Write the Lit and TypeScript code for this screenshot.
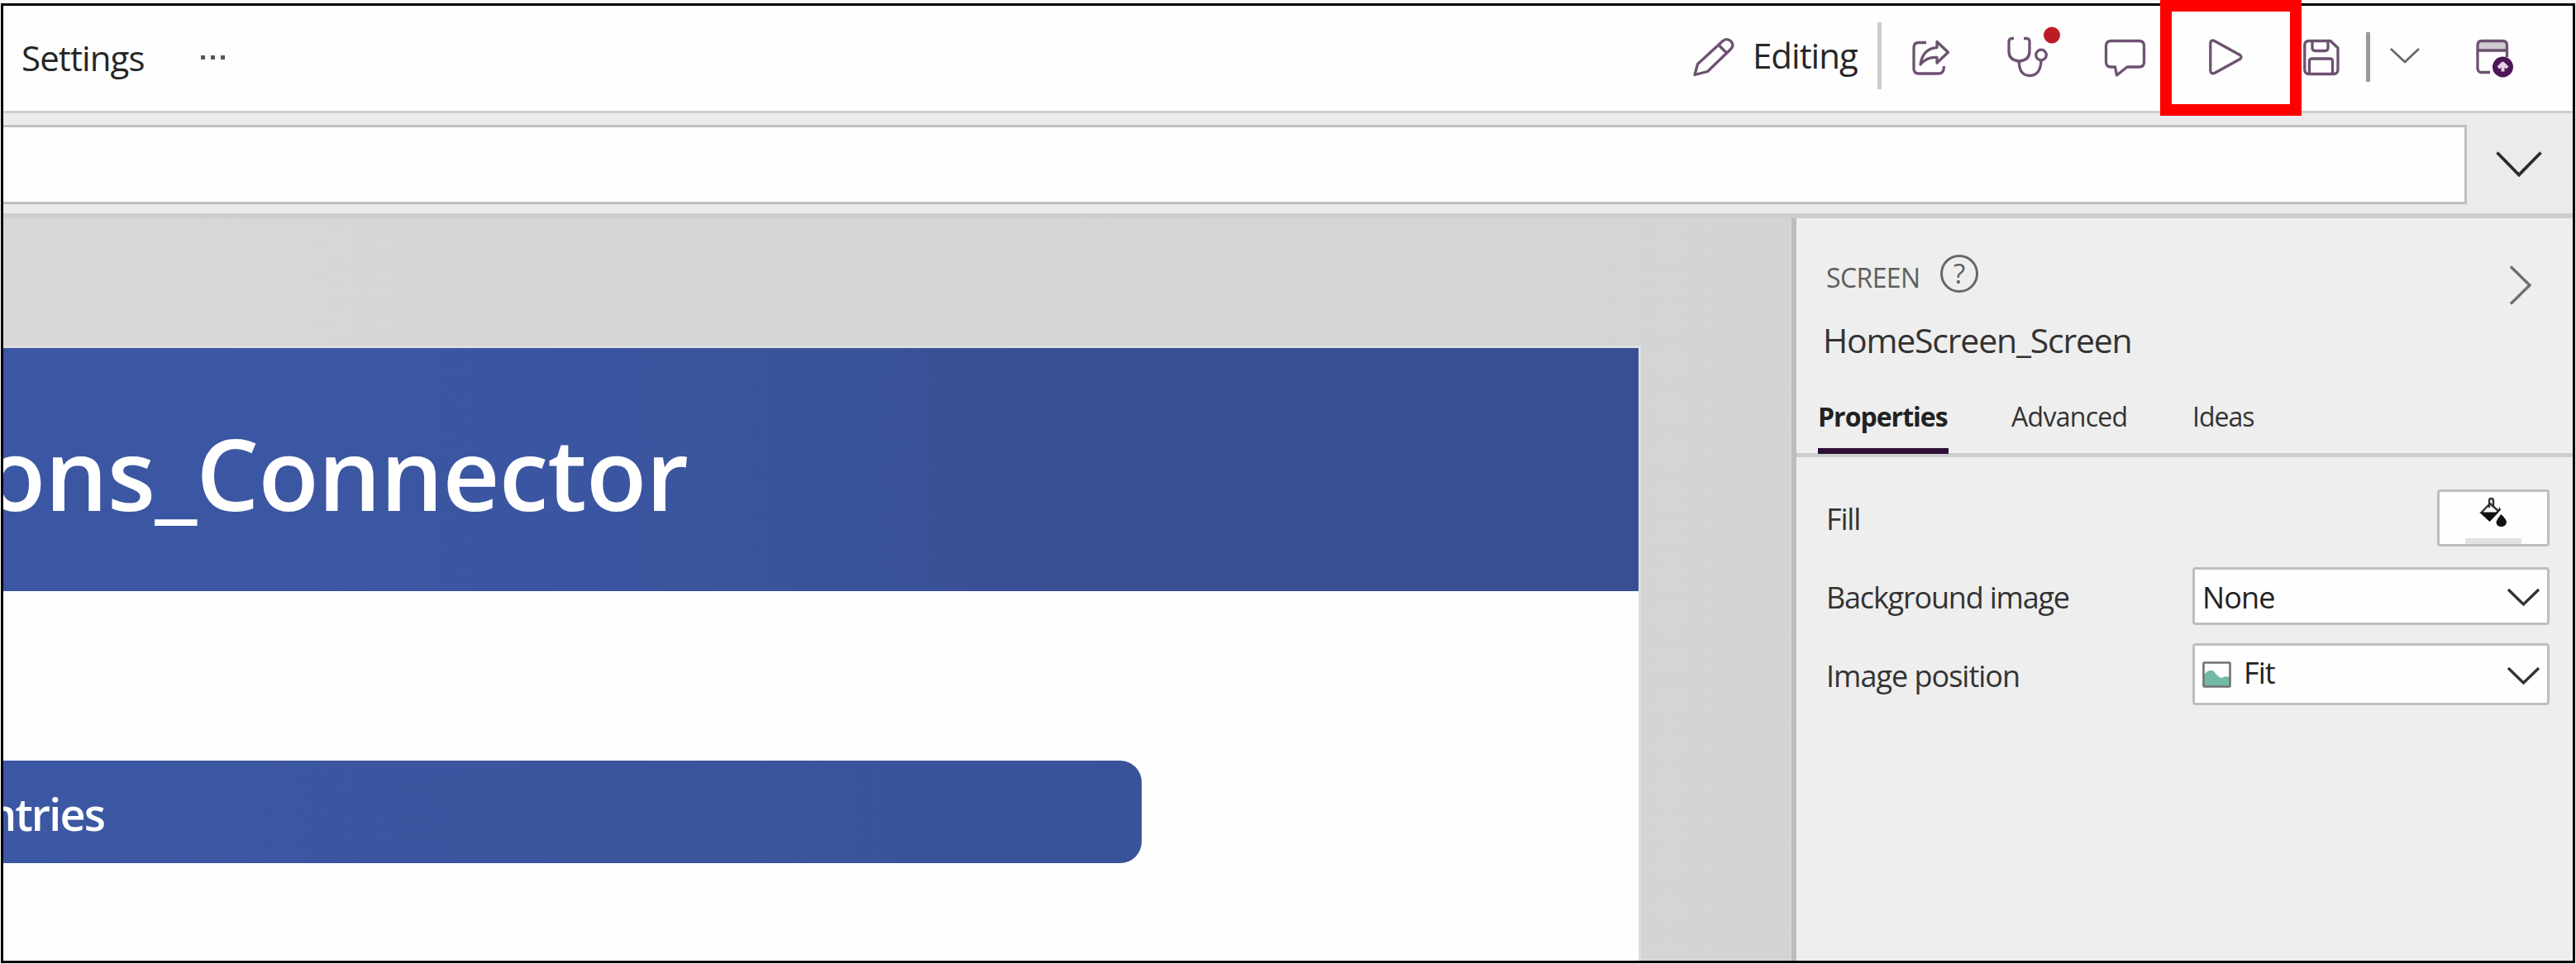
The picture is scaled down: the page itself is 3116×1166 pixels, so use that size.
import { LitElement, html, css, svg } from "lit";
import { customElement, property } from "lit/decorators.js";

const FONT = css`"Open Sans", "Noto Sans", "Liberation Sans", sans-serif`;

const ICONS: Record<string, { w: number; h: number; body: unknown }> = {
  pencil: {
    w: 50, h: 54,
    body: svg`<path d="M2 46.5 L5.5 33.5 L36 5.5 Q41 1.500 46 6 Q50 11 45.500 15.500 L17.500 42.500 Z M31 10.500 L41 20.500"/>`,
  },
  share: {
    w: 46, h: 54,
    body: svg`<path d="M18 7.500 H9 Q3 7.500 3 13.500 V39 Q3 45 9 45 H33 Q39.500 45 39.500 36"/>
      <path d="M31 6.500 L44.500 19.300 L31 32 V25.500 Q19 24.500 11 34 Q13.500 15 31 13.300 Z"/>`,
  },
  stethoscope: {
    w: 64, h: 54,
    body: svg`<path d="M8 2.500 H5.500 Q2 2.500 2 6.500 V18 Q2 29 14.500 30 Q27 29 27 18 V6.500 Q27 2.500 23.500 2.500 H20"/>
      <path d="M14.500 30 V33.500 Q15.500 47.500 27.500 47.500 Q40 47 41 30"/>
      <circle cx="41" cy="22.500" r="6.300"/>
      <circle class="alert" cx="54" cy="-1.500" r="10"/>`,
  },
  comment: {
    w: 50, h: 54,
    body: svg`<path d="M7.500 5.500 H41.500 Q47.500 5.500 47.500 11.500 V31 Q47.500 37 41.500 37 H27 L14.500 47 L12.500 37 H7.500 Q1.500 37 1.500 31 V11.500 Q1.500 5.500 7.500 5.500 Z"/>`,
  },
  play: {
    w: 44, h: 54,
    body: svg`<path d="M2.800 9 Q2.800 3 8.500 6 L38.500 22.500 Q41.500 25 38.500 27.500 L8.500 44 Q2.800 46.500 2.800 41 Z"/>`,
  },
  save: {
    w: 44, h: 54,
    body: svg`<path d="M7 5.500 H33 L42 14 V40 Q42 45.500 36.500 45.500 H7 Q1.800 45.500 1.800 40 V11 Q1.800 5.500 7 5.500 Z"/>
      <path d="M11 6 V14 Q11 17.500 14.500 17.500 H26.500 Q30 17.500 30 14 V6"/>
      <path d="M7.500 45 V30 Q7.500 27 10.500 27 H32.500 Q35.500 27 35.500 30 V45"/>`,
  },
  chevronSmall: { w: 36, h: 54, body: svg`<path class="thin" d="M1 15 L18 31 L35 15"/>` },
  publish: {
    w: 46, h: 54,
    body: svg`<path class="title" d="M2 6 H37 V16 H2 Z"/>
      <path d="M17 43.500 H7 Q2 43.500 2 38.500 V10.500 Q2 5.500 7 5.500 H32 Q37.500 5.500 37.500 10.500 V25 M2 17 H37"/>
      <circle class="badge" cx="32.500" cy="37" r="12.500"/>
      <path class="up" d="M32.500 42.500 V34 M27 38 L32.500 32.500 L38 38"/>`,
  },
  chevronBig: { w: 56, h: 32, body: svg`<path class="dark" d="M1.500 1.500 L28 28.500 L54.500 1.500"/>` },
  chevronRight: { w: 28, h: 48, body: svg`<path class="grey" d="M2 1.500 L25 24 L2 46.500"/>` },
  chevronSelect: { w: 40, h: 23, body: svg`<path class="select" d="M2 2 L20.500 20 L39 2"/>` },
  bucket: {
    w: 36, h: 38,
    body: svg`<path class="ring" d="M13 13 V5 Q13 2 15.500 2 Q18 2 18 5 V13"/>
      <path class="ring" d="M14 8 L4 18.500 L13.500 28 L24 17 Z"/>
      <path class="solid" d="M1 18.500 H24.500 L13.500 30 Z M25.500 12 L23 19 L27 16 Z"/>
      <path class="solid" d="M27.500 21 Q34.500 28 34 31 Q33 36 27.500 36 Q22 36 21.500 31 Q21.500 28 27.500 21 Z"/>`,
  },
  picture: {
    w: 35, h: 32,
    body: svg`<path class="hill" d="M2 16 Q9 8 14 12 Q18 18 23 20 Q28 17 33 19 V30 H2 Z"/>
      <rect class="edge" x="1.500" y="1.500" width="32" height="29" rx="1"/>`,
  },
};

@customElement("ui-icon")
export class UiIcon extends LitElement {
  @property() name = "pencil";

  static styles = css`
    :host { display: block; flex: none; }
    svg { display: block; overflow: visible; fill: none; stroke: #6c5270; stroke-width: 3.3; stroke-linejoin: round; }
    .alert { fill: #bd1c25; stroke: none; }
    .thin { stroke: #666; stroke-width: 2.6; }
    .title { fill: #cfcbd0; stroke: none; }
    .badge { fill: #4d1656; stroke: none; }
    .up { stroke: #e3d3e7; stroke-width: 4; }
    .dark { stroke: #2b2b2b; stroke-width: 3.8; stroke-linejoin: miter; }
    .grey { stroke: #6e6e6e; stroke-width: 3.4; stroke-linejoin: miter; }
    .select { stroke: #333; stroke-width: 3.4; stroke-linejoin: miter; }
    .ring { stroke: #333; stroke-width: 2.4; }
    .solid { fill: #111; stroke: none; }
    .hill { fill: #74b9a8; stroke: none; }
    .edge { stroke: #6d7371; stroke-width: 2.6; }
  `;

  render() {
    const icon = ICONS[this.name];
    return html`<svg width=${icon.w} height=${icon.h} viewBox="0 0 ${icon.w} ${icon.h}">${icon.body}</svg>`;
  }
}

@customElement("top-bar")
export class TopBar extends LitElement {
  static styles = css`
    :host { display: flex; align-items: flex-start; box-sizing: border-box; height: 130px; background: #fefefe;
      border-bottom: 3px solid #cdcdcd; padding: 37px 71px 0 22px; font: 42px/54px ${FONT}; color: #262626; }
    .menu { letter-spacing: -0.9px; margin-top: -1px; }
    .menu.mode { width: 131px; margin: -4px 20px 0 22px; letter-spacing: -1px; white-space: nowrap; }
    .dots { display: flex; gap: 7px; margin: 23px 0 0 68px; }
    .dot { width: 5px; height: 5px; background: #555; }
    .tools { display: flex; align-items: flex-start; margin-left: auto; }
    .rule { width: 5px; height: 81px; margin-top: -17px; background: #cdcdcd; }
    .rule.dark { height: 60px; margin-top: -5px; background: #9a9a9a; }
    .share { margin-left: 36px; }
    .check { margin-left: 70px; }
    .talk { margin-left: 54px; }
    .play { margin-left: 75px; }
    .save { margin: 0 32px 0 71px; }
    .more { margin: 0 68px 0 24px; }
  `;

  render() {
    return html`
      <div class="menu">Settings</div>
      <div class="dots"><i class="dot"></i><i class="dot"></i><i class="dot"></i></div>
      <div class="tools">
        <ui-icon name="pencil"></ui-icon>
        <div class="menu mode">Editing</div>
        <div class="rule"></div>
        <ui-icon class="share" name="share"></ui-icon>
        <ui-icon class="check" name="stethoscope"></ui-icon>
        <ui-icon class="talk" name="comment"></ui-icon>
        <ui-icon class="play" name="play"></ui-icon>
        <ui-icon class="save" name="save"></ui-icon>
        <div class="rule dark"></div>
        <ui-icon class="more" name="chevronSmall"></ui-icon>
        <ui-icon name="publish"></ui-icon>
      </div>`;
  }
}

@customElement("app-canvas")
export class AppCanvas extends LitElement {
  static styles = css`
    :host { display: flex; flex-direction: column; width: 2163px; flex: none; box-sizing: border-box; padding-top: 157px;
      overflow: hidden; background: linear-gradient(90deg, #d7d7d7, #d4d4d4); font-family: ${FONT}; font-weight: 600; color: #fff; }
    .screen { width: 1978px; flex: 1; background: #fefefe; box-shadow: 0 0 0 3px #dededf; }
    .banner { height: 294px; overflow: hidden; white-space: nowrap; background: linear-gradient(90deg, #3b57a3, #3b56a1 35%, #394f94 65%, #394f94); }
    .title { margin: 86px 0 0 -22px; font-size: 120px; line-height: 130px; letter-spacing: -0.9px; }
    .entry { width: 1377px; height: 124px; margin-top: 205px; overflow: hidden; white-space: nowrap; border-radius: 0 26px 26px 0;
      background: linear-gradient(90deg, #3c57a3, #3a529a); }
    .label { margin: 29px 0 0 -18px; font-size: 54px; line-height: 70px; letter-spacing: -1.9px; }
  `;

  render() {
    return html`
      <div class="screen">
        <div class="banner"><div class="title">ons_Connector</div></div>
        <div class="entry"><div class="label">ntries</div></div>
      </div>`;
  }
}

@customElement("property-panel")
export class PropertyPanel extends LitElement {
  static styles = css`
    :host { display: block; flex: 1; box-sizing: border-box; border-left: 6px solid #bdbdbd; background: #eee;
      font: 36px/48px ${FONT}; color: #333; white-space: nowrap; }
    .head { display: flex; align-items: flex-start; height: 74px; padding: 44px 49px 0 36px; }
    .kind { width: 138px; margin-top: 6px; font-size: 32px; line-height: 44px; color: #5e5e5e; letter-spacing: -0.6px; }
    .help { box-sizing: border-box; width: 46px; height: 46px; border: 3px solid #666; border-radius: 50%;
      font-size: 33px; line-height: 40px; text-align: center; color: #5e5e5e; }
    .close { margin: 13px 0 0 auto; }
    .name { height: 98px; padding: 1px 0 0 32px; font-size: 41px; line-height: 56px; letter-spacing: -1.2px; }
    .tabs { display: flex; height: 67px; padding-left: 26px; border-bottom: 5px solid #cdcdcd; font-size: 32px; line-height: 46px; }
    .tab { box-sizing: border-box; height: 68px; letter-spacing: -0.7px; font-weight: 500; }
    .tab.on { width: 158px; border-bottom: 7px solid #2e1036; font-weight: 700; color: #222; letter-spacing: -1px; }
    .tab.advanced { width: 220px; margin-left: 76px; }
    .tab.ideas { margin-left: -1px; letter-spacing: -1px; }
    .rows { padding: 38px 28px 0 36px; }
    .row { display: flex; align-items: center; justify-content: space-between; height: 70px; }
    .row.image { margin-top: 25px; }
    .row.position { margin-top: 24px; }
    .text { margin-top: 3px; letter-spacing: -1.2px; }
    .position .caption { margin-top: 6px; letter-spacing: -1px; }
    .swatch { display: flex; flex-direction: column; align-items: center; box-sizing: border-box; width: 136px; height: 69px;
      padding-top: 6px; border: 3px solid #bebebe; border-radius: 4px; background: #fefefe; }
    .shade { width: 68px; height: 7px; margin-top: 12px; background: #e3e3e3; }
    .select { display: flex; align-items: center; box-sizing: border-box; width: 432px; height: 70px; padding: 0 9px 0 9px;
      border: 3px solid #bebebe; border-radius: 4px; background: #fefefe; color: #222; }
    .select .text { letter-spacing: -0.9px; }
    .select.fit { height: 75px; }
    .fit .text { margin: -1px 0 1px 15px; }
    .arrow { margin: 2px 0 0 auto; }
    .fit .arrow { margin-top: 5px; }
    .thumb { margin-top: 2px; }
  `;

  render() {
    return html`
      <div class="head">
        <div class="kind">SCREEN</div>
        <div class="help">?</div>
        <ui-icon class="close" name="chevronRight"></ui-icon>
      </div>
      <div class="name">HomeScreen_Screen</div>
      <div class="tabs">
        <div class="tab on">Properties</div>
        <div class="tab advanced">Advanced</div>
        <div class="tab ideas">Ideas</div>
      </div>
      <div class="rows">
        <div class="row">
          <div class="text">Fill</div>
          <div class="swatch"><ui-icon name="bucket"></ui-icon><div class="shade"></div></div>
        </div>
        <div class="row image">
          <div class="text">Background image</div>
          <div class="select"><div class="text">None</div><ui-icon class="arrow" name="chevronSelect"></ui-icon></div>
        </div>
        <div class="row position">
          <div class="text caption">Image position</div>
          <div class="select fit"><ui-icon class="thumb" name="picture"></ui-icon><div class="text">Fit</div><ui-icon class="arrow" name="chevronSelect"></ui-icon></div>
        </div>
      </div>`;
  }
}

@customElement("app-root")
export class AppRoot extends LitElement {
  static styles = css`
    :host { display: block; position: relative; box-sizing: border-box; width: 3116px; height: 1166px; padding: 4px 1px 1px; background: #f8f8f8; overflow: hidden; }
    .frame { display: flex; flex-direction: column; box-sizing: border-box; height: 1161px; border: 3px solid #000; overflow: hidden; }
    .formula { display: flex; box-sizing: border-box; height: 127px; padding-top: 14px; background: #ebebeb; border-bottom: 6px solid #cecece; }
    .input { box-sizing: border-box; width: 2980px; height: 96px; border: 3px solid #bfbfbf; border-left: 0; background: #fefefe; }
    .expand { margin: 32px 0 0 35px; }
    .body { display: flex; flex: 1; min-height: 0; }
    .highlight { position: absolute; left: 2613px; top: 0; box-sizing: border-box; width: 171px; height: 140px; border: 14px solid #f00; }
  `;

  render() {
    return html`
      <div class="frame">
        <top-bar></top-bar>
        <div class="formula"><div class="input"></div><ui-icon class="expand" name="chevronBig"></ui-icon></div>
        <div class="body"><app-canvas></app-canvas><property-panel></property-panel></div>
      </div>
      <div class="highlight"></div>`;
  }
}
